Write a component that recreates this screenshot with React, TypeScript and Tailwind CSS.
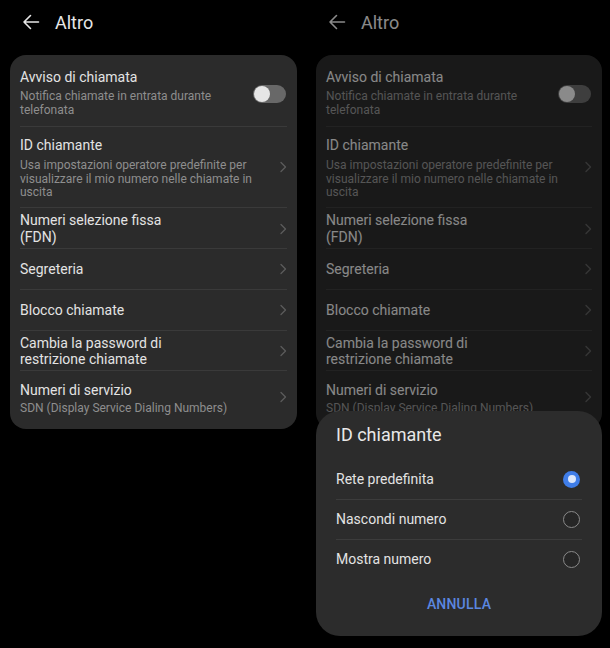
import React from "react";

const Chevron = () => (
  <svg width="8" height="12" viewBox="0 0 8 12" className="shrink-0">
    <path d="M2 1.5 L6.5 6 L2 10.5" fill="none" stroke="#5c5c5c" strokeWidth="1.3" strokeLinecap="round" strokeLinejoin="round" />
  </svg>
);

const BackArrow = () => (
  <svg width="18" height="16" viewBox="0 0 18 16">
    <path d="M16.5 8 H2 M8.5 1.5 L2 8 L8.5 14.5" fill="none" stroke="#e6e6e6" strokeWidth="1.6" strokeLinecap="round" strokeLinejoin="round" />
  </svg>
);

const Toggle = () => (
  <div className="w-[33px] h-[18px] rounded-full bg-[#686868] flex items-center pl-[1px] shrink-0">
    <div className="w-[16px] h-[16px] rounded-full bg-[#e6e6e6]" />
  </div>
);

function Screen() {
  return (
    <div className="flex flex-col">
      <div className="h-[44px] flex items-center">
        <div className="ml-[12px] flex items-center">
          <BackArrow />
        </div>
        <div className="ml-[15px] text-[18px] leading-[22px] text-[#e6e6e6] mt-[1px]">Altro</div>
      </div>
      <div className="mt-[11px] rounded-[16px] bg-[#2b2b2b] px-[10px]">
        {/* Row 1 */}
        <div className="flex items-center pt-[12px] pb-[9px]">
          <div className="flex-1">
            <div className="text-[14px] leading-[20px] text-[#e3e3e3]">Avviso di chiamata</div>
            <div className="mt-[3px] text-[12px] leading-[13.5px] text-[#8e8e8e] pr-[30px]">Notifica chiamate in entrata durante telefonata</div>
          </div>
          <div className="mt-[3px] mr-[1px]">
            <Toggle />
          </div>
        </div>
        {/* Row 2 */}
        <div className="flex items-center border-t border-[#3a3a3a] pt-[8px] pb-[7px]">
          <div className="flex-1 pr-[20px]">
            <div className="text-[14px] leading-[20px] text-[#e3e3e3]">ID chiamante</div>
            <div className="mt-[4px] text-[12px] leading-[13.5px] text-[#8e8e8e]">Usa impostazioni operatore predefinite per visualizzare il mio numero nelle chiamate in uscita</div>
          </div>
          <Chevron />
        </div>
        {/* Row 3 */}
        <div className="flex items-center border-t border-[#3a3a3a] h-[41px] pt-[3px]">
          <div className="flex-1 text-[14px] leading-[17px] text-[#e3e3e3]">
            Numeri selezione fissa
            <br />
            (FDN)
          </div>
          <Chevron />
        </div>
        {/* Row 4 */}
        <div className="flex items-center border-t border-[#3a3a3a] h-[41px]">
          <div className="flex-1 text-[14px] leading-[20px] text-[#e3e3e3]">Segreteria</div>
          <Chevron />
        </div>
        {/* Row 5 */}
        <div className="flex items-center border-t border-[#3a3a3a] h-[41px]">
          <div className="flex-1 text-[14px] leading-[20px] text-[#e3e3e3]">Blocco chiamate</div>
          <Chevron />
        </div>
        {/* Row 6 */}
        <div className="flex items-center border-t border-[#3a3a3a] h-[40px] pt-[2px]">
          <div className="flex-1 text-[14px] leading-[16.5px] text-[#e3e3e3]">
            Cambia la password di
            <br />
            restrizione chiamate
          </div>
          <Chevron />
        </div>
        {/* Row 7 */}
        <div className="flex items-center border-t border-[#3a3a3a] pt-[9px] pb-[14px]">
          <div className="flex-1">
            <div className="text-[14px] leading-[20px] text-[#e3e3e3]">Numeri di servizio</div>
            <div className="mt-[1px] text-[12px] leading-[14px] text-[#8e8e8e]">SDN (Display Service Dialing Numbers)</div>
          </div>
          <Chevron />
        </div>
      </div>
    </div>
  );
}

const Radio = ({ on }: { on?: boolean }) =>
  on ? (
    <div className="w-[17px] h-[17px] rounded-full bg-[#3f7de8] flex items-center justify-center shrink-0">
      <div className="w-[8px] h-[8px] rounded-full bg-[#dce7fb]" />
    </div>
  ) : (
    <div className="w-[17px] h-[17px] rounded-full border-[1.5px] border-[#8a8a8a] bg-[#262626] shrink-0" />
  );

function Dialog() {
  const opts = [
    { t: "Rete predefinita", on: true },
    { t: "Nascondi numero", on: false },
    { t: "Mostra numero", on: false },
  ];
  return (
    <div className="rounded-[24px] bg-[#2c2c2c] px-[20px] pt-[12px] pb-[7px]">
      <div className="text-[18px] leading-[24px] text-[#e8e8e8]">ID chiamante</div>
      <div className="mt-[12px]">
        {opts.map((o, i) => (
          <div
            key={o.t}
            className={
              "h-[40px] flex items-center justify-between pr-[2px] " +
              (i > 0 ? "border-t border-[#3c3c3c]" : "")
            }
          >
            <span className="text-[14px] text-[#e3e3e3]">{o.t}</span>
            <Radio on={o.on} />
          </div>
        ))}
      </div>
      <div className="h-[50px] flex items-center justify-center">
        <span className="text-[14px] font-medium tracking-[0.2px] text-[#5b87e0]">ANNULLA</span>
      </div>
    </div>
  );
}

export default function App() {
  return (
    <div
      className="w-[610px] h-[648px] bg-black flex overflow-hidden"
      style={{ fontFamily: "Roboto, 'Noto Sans', sans-serif" }}
    >
      <div className="w-[305px] pl-[10px] pr-[8px]">
        <Screen />
      </div>
      <div className="w-[305px] pl-[11px] pr-[8px] relative">
        <Screen />
        <div className="absolute inset-0 bg-black/40" />
        <div className="absolute left-[11px] top-[411px] w-[286px]">
          <Dialog />
        </div>
      </div>
    </div>
  );
}
